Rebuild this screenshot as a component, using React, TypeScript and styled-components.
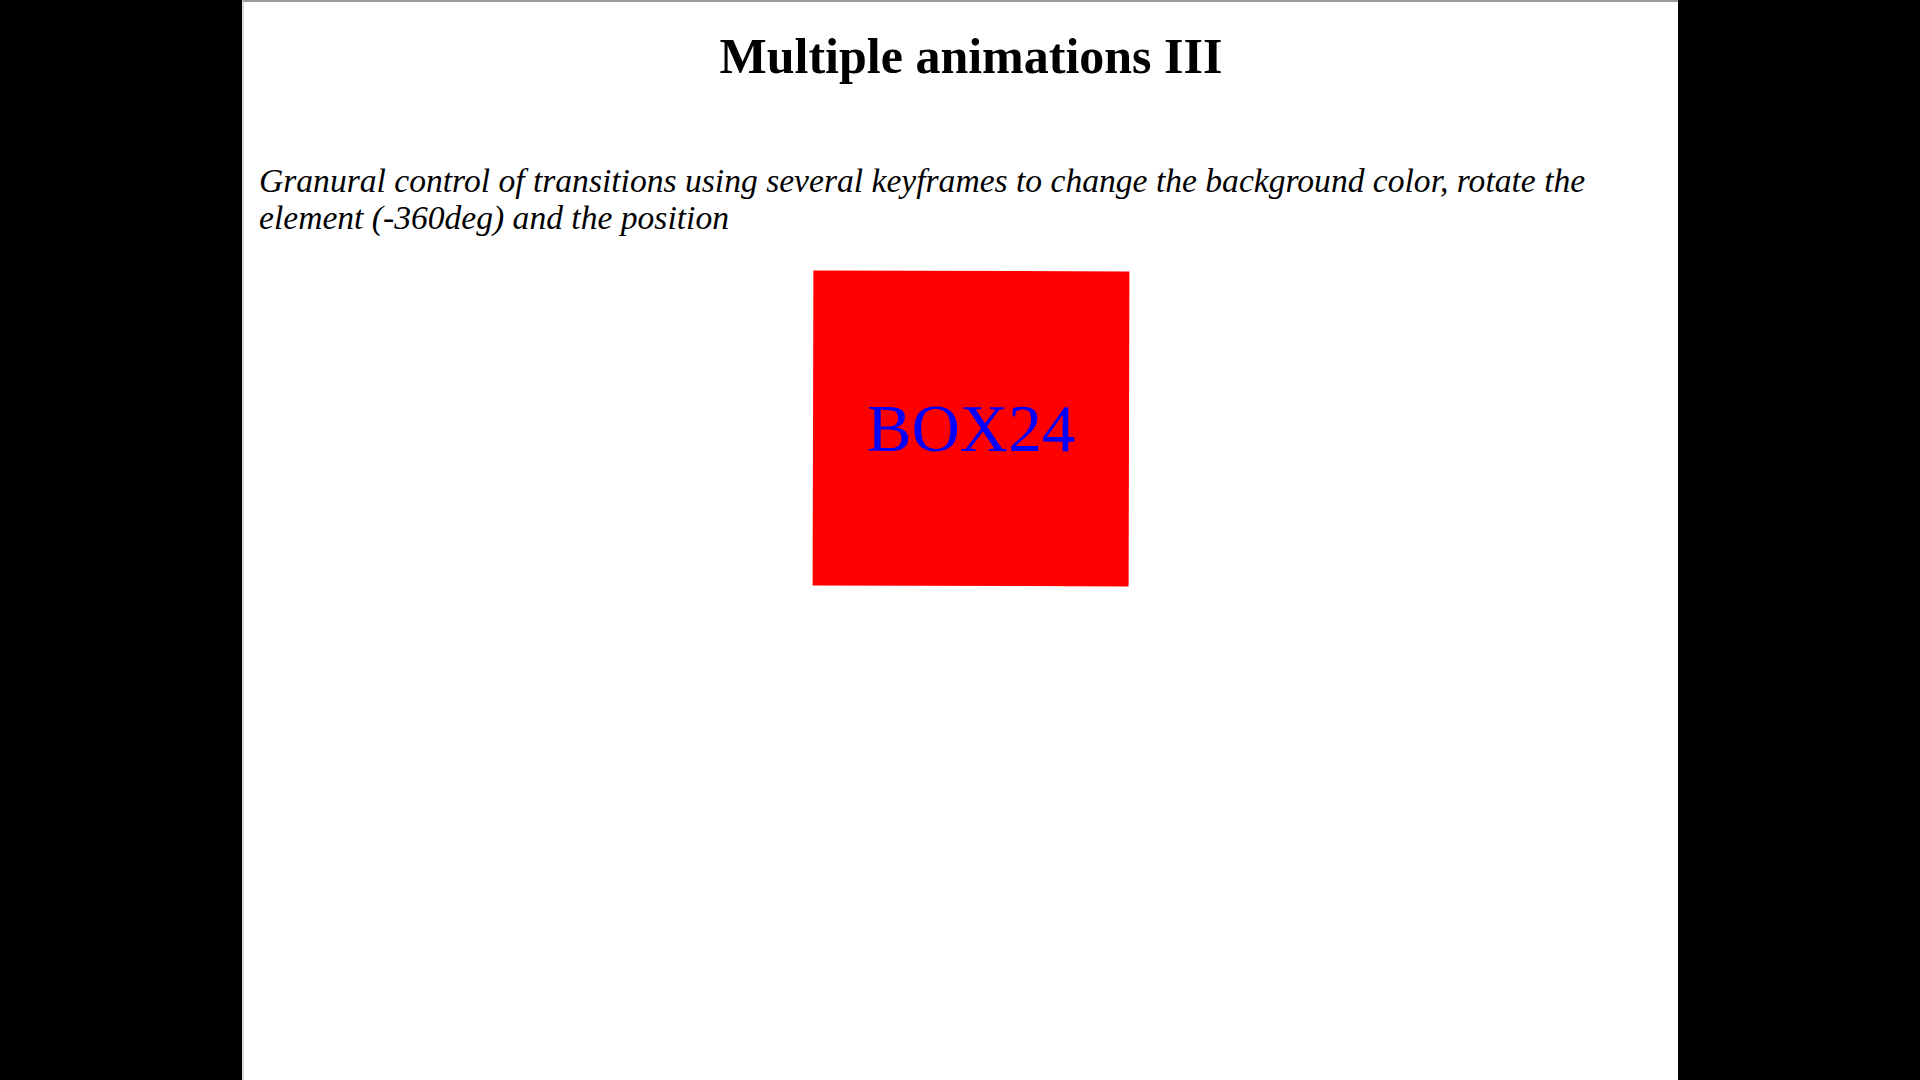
import React from 'react';
import styled, { createGlobalStyle } from 'styled-components';

const GlobalStyle = createGlobalStyle`
  *, *::before, *::after {
    box-sizing: border-box;
  }
  html, body {
    margin: 0;
    padding: 0;
    background: #000;
  }
  body {
    font-family: 'Liberation Serif', 'Times New Roman', serif;
    overflow: hidden;
  }
`;

const Stage = styled.div`
  display: flex;
  height: 100vh;
  padding-left: 242px;
`;

const Page = styled.main`
  width: 1436px;
  height: 100%;
  background: #fff;
  border-top: 2px solid #9a9a9a;
  border-left: 2px solid #d8d8d8;
  overflow: hidden;
  padding-left: 15px;
`;

const Content = styled.div`
  width: 1424px;
  flex-shrink: 0;
  display: flex;
  flex-direction: column;
  align-items: center;
`;

const Title = styled.h1`
  margin: 29px 0 0;
  font-size: 50px;
  line-height: 50px;
  font-weight: bold;
  color: #000;
  text-align: center;
`;

const Lead = styled.p`
  align-self: flex-start;
  max-width: 1390px;
  margin: 81px 0 0;
  font-size: 33.6px;
  line-height: 37px;
  font-style: italic;
  color: #000;
`;

const Box = styled.div`
  width: 316px;
  height: 315px;
  margin-top: 35px;
  background: #ff0000;
  color: #0000ff;
  font-size: 67px;
  display: flex;
  align-items: center;
  justify-content: center;
  transform: rotate(0.15deg);
`;

export default function App() {
  return (
    <>
      <GlobalStyle />
      <Stage>
        <Page>
          <Content>
            <Title>Multiple animations III</Title>
            <Lead>
              Granural control of transitions using several keyframes to change the
              background color, rotate the element (-360deg) and the position
            </Lead>
            <Box>BOX24</Box>
          </Content>
        </Page>
      </Stage>
    </>
  );
}
